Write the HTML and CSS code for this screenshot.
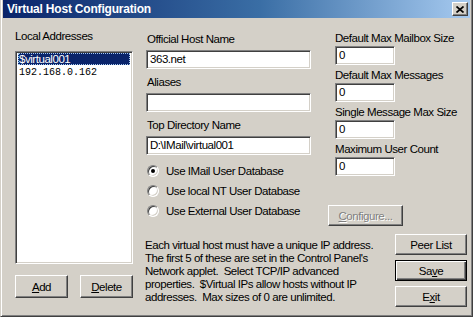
FILE: index.html
```html
<!DOCTYPE html>
<html>

<head>
    <title>Virtual Host Configuration</title>
    <link rel="stylesheet" href="styles.css">
</head>

<body>
    <div class="window">
        <div class="titlebar">
            <span class="title">Virtual Host Configuration</span>
            <button class="close-btn">
                <svg width="8" height="7" viewBox="0 0 8 7">
                    <path d="M0.5 0.5 L7.5 6.5 M7.5 0.5 L0.5 6.5" stroke="#000" stroke-width="1.7" fill="none" />
                </svg>
            </button>
        </div>

        <div class="content">
            <div class="left-col">
                <div class="label">Local Addresses</div>
                <div class="listbox">
                    <div class="item selected">$virtual001</div>
                    <div class="item mono">192.168.0.162</div>
                </div>
                <div class="btn-row">
                    <button class="btn"><u>A</u>dd</button>
                    <button class="btn"><u>D</u>elete</button>
                </div>
            </div>

            <div class="main">
                <div class="top">
                    <div class="mid-col">
                        <div class="field">
                            <div class="label">Official Host Name</div>
                            <div class="input">363.net</div>
                        </div>
                        <div class="field">
                            <div class="label">Aliases</div>
                            <div class="input"></div>
                        </div>
                        <div class="field">
                            <div class="label">Top Directory Name</div>
                            <div class="input">D:\IMail\virtual001</div>
                        </div>
                        <div class="radios">
                            <div class="radio-row"><span class="radio checked"></span>Use IMail User Database</div>
                            <div class="radio-row"><span class="radio"></span>Use local NT User Database</div>
                            <div class="radio-row"><span class="radio"></span>Use External User Database</div>
                        </div>
                    </div>

                    <div class="right-col">
                        <div class="limits">
                            <div class="limit">
                                <div class="label">Default Max Mailbox Size</div>
                                <div class="input small">0</div>
                            </div>
                            <div class="limit">
                                <div class="label">Default Max Messages</div>
                                <div class="input small">0</div>
                            </div>
                            <div class="limit">
                                <div class="label">Single Message Max Size</div>
                                <div class="input small">0</div>
                            </div>
                            <div class="limit">
                                <div class="label">Maximum User Count</div>
                                <div class="input small">0</div>
                            </div>
                        </div>
                        <button class="btn configure" disabled><u>C</u>onfigure...</button>
                    </div>
                </div>

                <div class="bottom">
                    <p class="info">
                        Each virtual host must have a unique IP address.<br>
                        The first 5 of these are set in the Control Panel's<br>
                        Network applet.&nbsp; Select TCP/IP advanced<br>
                        properties.&nbsp; $Virtual IPs allow hosts without IP<br>
                        addresses.&nbsp; Max sizes of 0 are unlimited.
                    </p>
                    <div class="side-buttons">
                        <button class="btn wide">Peer List</button>
                        <button class="btn wide default">Sa<u>v</u>e</button>
                        <button class="btn wide">E<u>x</u>it</button>
                    </div>
                </div>
            </div>
        </div>
    </div>
</body>

</html>
```

FILE: styles.css
```css
body {
    margin: 0;
    font-family: "Liberation Sans", Arial, sans-serif;
    font-size: 11.5px;
    letter-spacing: -0.45px;
    color: #000;
    background-color: #d4d0c8;
}

.window {
    width: 473px;
    height: 317px;
    box-sizing: border-box;
    background-color: #d4d0c8;
    border-left: 1px solid #d4d0c8;
    border-right: 1px solid #404040;
    border-bottom: 1px solid #404040;
    box-shadow: inset 1px 0 #fff, inset -1px -1px #808080;
    padding: 0 2px 2px 2px;
    display: flex;
    flex-direction: column;
}

.titlebar {
    height: 18px;
    flex-shrink: 0;
    display: flex;
    align-items: center;
    justify-content: space-between;
    background: linear-gradient(to right, #0a246a, #3a6ea5 55%, #a6caf0);
    padding: 0 2px 0 4px;
}

.title {
    font-weight: bold;
    font-size: 12px;
    letter-spacing: -0.2px;
    color: #fff;
}

.close-btn {
    width: 16px;
    height: 14px;
    padding: 0;
    display: flex;
    align-items: center;
    justify-content: center;
    background-color: #d4d0c8;
    border: 1px solid;
    border-color: #fff #404040 #404040 #fff;
    box-shadow: inset -1px -1px #808080;
}

.content {
    flex: 1;
    display: flex;
    padding: 11px 3px 0 12px;
}

.label {
    line-height: 14px;
    white-space: nowrap;
}

/* left column */

.left-col {
    width: 118px;
    flex-shrink: 0;
    display: flex;
    flex-direction: column;
}

.listbox {
    margin-top: 8px;
    height: 213px;
    box-sizing: border-box;
    background-color: #fff;
    border: 1px solid;
    border-color: #808080 #fff #fff #808080;
    box-shadow: inset 1px 1px #404040, inset -1px -1px #d4d0c8;
    padding: 1px 2px;
}

.item {
    line-height: 12px;
    padding-left: 1px;
    white-space: nowrap;
}

.item.selected {
    background-color: #0a246a;
    color: #fff;
    outline: 1px dotted #a6caf0;
    outline-offset: -1px;
}

.item.mono {
    font-family: "Liberation Mono", monospace;
    font-size: 10px;
    letter-spacing: 0;
    line-height: 14px;
    padding-top: 1px;
}

.btn-row {
    margin-top: 11px;
    display: flex;
    justify-content: space-between;
}

/* buttons */

.btn {
    font-family: inherit;
    font-size: inherit;
    letter-spacing: inherit;
    color: #000;
    background-color: #d4d0c8;
    padding: 0;
    border: 1px solid;
    border-color: #fff #404040 #404040 #fff;
    box-shadow: inset -1px -1px #808080;
    width: 53px;
    height: 23px;
}

.btn.wide {
    width: 72px;
    height: 21px;
}

.btn.default {
    border: 1px solid #000;
    box-shadow: inset 1px 1px #fff, inset -1px -1px #404040, inset -2px -2px #808080;
}

.btn.configure {
    width: 75px;
    height: 21px;
    margin-top: 26px;
    color: #808080;
    text-shadow: 1px 1px #fff;
}

/* middle column */

.main {
    flex: 1;
    min-width: 0;
    margin-left: 13px;
    display: flex;
    flex-direction: column;
}

.top {
    display: flex;
}

.mid-col {
    width: 165px;
    flex-shrink: 0;
    padding-top: 3px;
}

.field {
    margin-bottom: 6px;
}

.field .label {
    padding-left: 1px;
    margin-bottom: 4px;
}

.input {
    height: 19px;
    box-sizing: border-box;
    background-color: #fff;
    border: 1px solid;
    border-color: #808080 #fff #fff #808080;
    box-shadow: inset 1px 1px #404040, inset -1px -1px #d4d0c8;
    padding: 0 3px;
    line-height: 17px;
    white-space: nowrap;
}

.radios {
    margin-top: 2px;
}

.radio-row {
    height: 20px;
    display: flex;
    align-items: center;
    padding-left: 1px;
    white-space: nowrap;
}

.radio {
    width: 12px;
    height: 12px;
    flex-shrink: 0;
    box-sizing: border-box;
    border-radius: 50%;
    background-color: #fff;
    border: 1px solid;
    border-color: #808080 #fff #fff #808080;
    box-shadow: inset 1px 1px #404040, inset -1px -1px #d4d0c8;
    margin-right: 7px;
    display: flex;
    align-items: center;
    justify-content: center;
}

.radio.checked::after {
    content: "";
    width: 4px;
    height: 4px;
    border-radius: 50%;
    background-color: #000;
}

/* right column */

.right-col {
    margin-left: 17px;
    padding-top: 2px;
    display: flex;
    flex-direction: column;
    align-items: flex-start;
}

.limits {
    padding-left: 7px;
}

.limit {
    margin-bottom: 3px;
}

.limit .label {
    margin-bottom: 1px;
}

.input.small {
    width: 60px;
}

/* bottom area */

.bottom {
    display: flex;
    justify-content: space-between;
    margin-top: 6px;
}

.info {
    margin: 7px 0 0 -1px;
    line-height: 13px;
    white-space: nowrap;
}

.side-buttons {
    padding-top: 2px;
    display: flex;
    flex-direction: column;
    gap: 5px;
}
```
